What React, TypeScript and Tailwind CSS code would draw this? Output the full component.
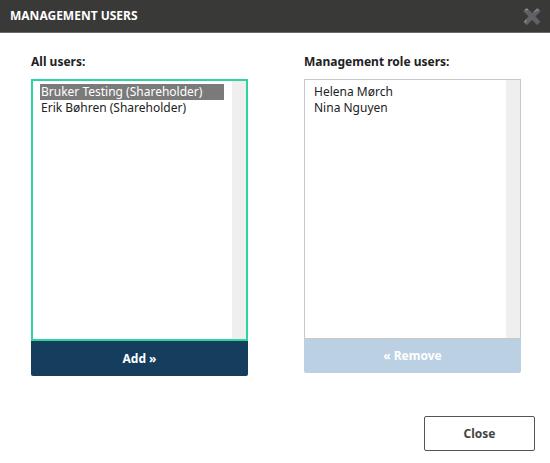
export default function App() {
  return (
    <div className="w-[550px] h-[463px] bg-white font-['Roboto',sans-serif] text-[#222] flex flex-col">
      <div className="h-[33px] bg-[#393937] border-b border-[#6a6a6a] flex items-center justify-between pl-[10px] pr-[8px]">
        <span className="text-white text-[12px] font-bold">MANAGEMENT USERS</span>
        <span className="text-white text-[16px] font-bold leading-none">✖</span>
      </div>
      <div className="flex gap-[56px] pl-[31px] pt-[20px]">
        <div className="w-[217px] flex flex-col">
          <div className="text-[12px] font-bold h-[26px]">All users:</div>
          <div className="h-[262px] border-2 border-[#2fd3a0] flex">
            <div className="flex-1 pt-[3px] pl-[7px] pr-[8px] text-[12px] leading-[16px]">
              <div className="bg-[#7a7a7a] text-white px-[1px]">Bruker Testing (Shareholder)</div>
              <div className="px-[1px]">Erik Bøhren (Shareholder)</div>
            </div>
            <div className="w-[14px] bg-[#efefef]" />
          </div>
          <button className="h-[35px] bg-[#143d5e] text-white text-[12px] font-bold rounded-b-[2px]">Add »</button>
        </div>
        <div className="w-[217px] flex flex-col">
          <div className="text-[12px] font-bold h-[26px]">Management role users:</div>
          <div className="h-[260px] border border-[#c8c8c8] flex">
            <div className="flex-1 pt-[4px] pl-[9px] text-[12px] leading-[16px]">
              <div>Helena Mørch</div>
              <div>Nina Nguyen</div>
            </div>
            <div className="w-[14px] bg-[#efefef]" />
          </div>
          <button className="h-[34px] bg-[#bcd0e3] text-white text-[12px] font-bold rounded-b-[2px]">« Remove</button>
        </div>
      </div>
      <div className="flex justify-end pr-[15px] pt-[40px]">
        <button className="w-[111px] h-[35px] border border-[#555] rounded-[2px] text-[12px] font-bold text-[#444]">Close</button>
      </div>
    </div>
  );
}
